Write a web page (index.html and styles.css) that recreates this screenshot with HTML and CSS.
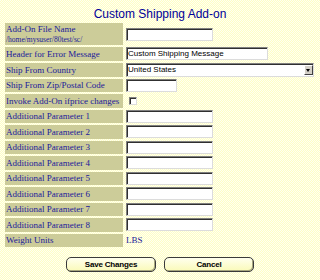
FILE: index.html
```html
<!DOCTYPE html>
<html lang="en">
<head>
    <meta charset="UTF-8">
    <meta name="viewport" content="width=device-width, initial-scale=1.0">
    <title>Custom Shipping Add-on</title>
    <link rel="stylesheet" href="styles.css">
</head>
<body>
    <h1 class="title">Custom Shipping Add-on</h1>
    <form class="addon-form">
        <table class="settings">
            <tr class="row-tall">
                <td class="label">Add-On File Name<br><span class="path">/home/mysuser/80test/sc/</span></td>
                <td class="field"><input type="text" class="text w-md"></td>
            </tr>
            <tr>
                <td class="label">Header for Error Message</td>
                <td class="field"><input type="text" class="text w-lg" value="Custom Shipping Message"></td>
            </tr>
            <tr>
                <td class="label">Ship From Country</td>
                <td class="field">
                    <div class="select-wrap">
                        <select class="select">
                            <option>United States</option>
                        </select>
                        <span class="select-arrow"></span>
                    </div>
                </td>
            </tr>
            <tr>
                <td class="label">Ship From Zip/Postal Code</td>
                <td class="field"><input type="text" class="text w-sm"></td>
            </tr>
            <tr>
                <td class="label">Invoke Add-On ifprice changes</td>
                <td class="field"><input type="checkbox" class="check"></td>
            </tr>
            <tr>
                <td class="label">Additional Parameter 1</td>
                <td class="field"><input type="text" class="text w-md"></td>
            </tr>
            <tr>
                <td class="label">Additional Parameter 2</td>
                <td class="field"><input type="text" class="text w-md"></td>
            </tr>
            <tr>
                <td class="label">Additional Parameter 3</td>
                <td class="field"><input type="text" class="text w-md"></td>
            </tr>
            <tr>
                <td class="label">Additional Parameter 4</td>
                <td class="field"><input type="text" class="text w-md"></td>
            </tr>
            <tr>
                <td class="label">Additional Parameter 5</td>
                <td class="field"><input type="text" class="text w-md"></td>
            </tr>
            <tr>
                <td class="label">Additional Parameter 6</td>
                <td class="field"><input type="text" class="text w-md"></td>
            </tr>
            <tr>
                <td class="label">Additional Parameter 7</td>
                <td class="field"><input type="text" class="text w-md"></td>
            </tr>
            <tr>
                <td class="label">Additional Parameter 8</td>
                <td class="field"><input type="text" class="text w-md"></td>
            </tr>
            <tr>
                <td class="label">Weight Units</td>
                <td class="field value">LBS</td>
            </tr>
        </table>
        <div class="actions">
            <button type="submit" class="btn">Save Changes</button>
            <button type="button" class="btn">Cancel</button>
        </div>
    </form>
</body>
</html>
```

FILE: styles.css
```css
body {
    margin: 0;
    background-color: #ffffd6;
    background-image: repeating-conic-gradient(#ffffc4 0 25%, #fffff2 0 50%);
    background-size: 2px 2px;
    font-family: 'Liberation Serif', serif;
}

.title {
    margin: 7px 0 0;
    font-family: 'Liberation Sans', Arial, sans-serif;
    font-size: 12px;
    font-weight: normal;
    line-height: 14px;
    color: #000099;
    text-align: center;
}

.addon-form {
    margin: 0;
}

.settings {
    margin-left: 3px;
    border-spacing: 2px;
}

.settings td {
    padding: 0;
    height: 13.5px;
    vertical-align: middle;
}

.settings .row-tall td {
    height: 22px;
}

.label {
    width: 116px;
    padding: 0 1px !important;
    background: #cccc99;
    color: #1a1a99;
    font-size: 9px;
    line-height: 10px;
    white-space: nowrap;
}

.path {
    font-size: 7.5px;
}

.field {
    padding-left: 1px !important;
}

.value {
    color: #1a1a99;
    font-size: 9px;
}

.text {
    display: block;
    box-sizing: border-box;
    height: 13px;
    margin: 0;
    padding: 0 1px;
    border: 1px solid;
    border-color: #808080 #dcdcdc #dcdcdc #808080;
    box-shadow: inset 1px 1px 0 #303030;
    background: white;
    font-family: 'Liberation Sans', Arial, sans-serif;
    font-size: 8px;
    color: black;
}

.w-sm {
    width: 51px;
}

.w-md {
    width: 87px;
}

.w-lg {
    width: 142px;
}

.select-wrap {
    position: relative;
    width: 188px;
    height: 14px;
}

.select {
    display: block;
    box-sizing: border-box;
    width: 100%;
    height: 14px;
    margin: 0;
    padding: 0 1px;
    appearance: none;
    border: 1px solid;
    border-color: #808080 #dcdcdc #dcdcdc #808080;
    box-shadow: inset 1px 1px 0 #303030;
    border-radius: 0;
    background: white;
    font-family: 'Liberation Sans', Arial, sans-serif;
    font-size: 8px;
    color: black;
}

.select-arrow {
    position: absolute;
    top: 2px;
    right: 1px;
    width: 9px;
    height: 10px;
    box-sizing: border-box;
    background: #d4d0c8;
    border: 1px solid;
    border-color: #ffffff #404040 #404040 #ffffff;
}

.select-arrow::after {
    content: "";
    position: absolute;
    left: 1px;
    top: 3px;
    border-left: 2.5px solid transparent;
    border-right: 2.5px solid transparent;
    border-top: 3px solid black;
}

.check {
    display: block;
    appearance: none;
    box-sizing: border-box;
    width: 8px;
    height: 8px;
    margin: 0 0 0 3px;
    border: 1px solid;
    border-color: #808080 #dcdcdc #dcdcdc #808080;
    box-shadow: inset 1px 1px 0 #303030;
    background: white;
}

.actions {
    display: flex;
    justify-content: center;
    gap: 8px;
    margin-top: 7.5px;
}

.btn {
    width: 90px;
    height: 15px;
    padding: 0;
    border: 1px solid #3a3a3a;
    border-radius: 5px;
    background: linear-gradient(#ffffee, #fafab8);
    box-shadow: inset -1px -1px 0 #a8a880;
    font-family: 'Liberation Sans', Arial, sans-serif;
    font-size: 8px;
    font-weight: bold;
    letter-spacing: -0.2px;
    color: black;
}
```
